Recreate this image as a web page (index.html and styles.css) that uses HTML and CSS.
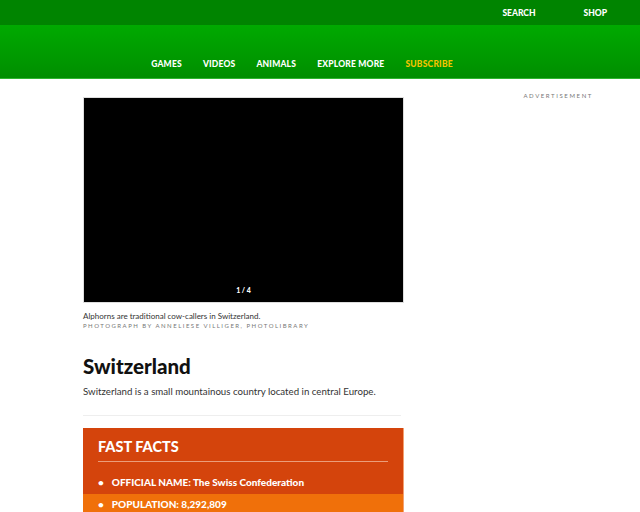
FILE: index.html
```html
<!DOCTYPE html>
<html lang="en">
<head>
  <meta charset="UTF-8" />
  <title>Switzerland - Kids</title>
  <link rel="stylesheet" href="styles.css">
</head>
<body>
  <header>
    <div class="top-bar">
      <a href="#">SEARCH</a>
      <a href="#">SHOP</a>
    </div>
    <nav class="main-nav">
      <a href="#">GAMES</a>
      <a href="#">VIDEOS</a>
      <a href="#">ANIMALS</a>
      <a href="#">EXPLORE MORE</a>
      <a href="#" class="subscribe">SUBSCRIBE</a>
    </nav>
  </header>

  <div class="page">
    <main class="article">
      <div class="gallery">
        <span class="counter">1 / 4</span>
      </div>
      <p class="caption">Alphorns are traditional cow-callers in Switzerland.</p>
      <p class="credit">PHOTOGRAPH BY ANNELIESE VILLIGER, PHOTOLIBRARY</p>

      <h1>Switzerland</h1>
      <p class="intro">Switzerland is a small mountainous country located in central Europe.</p>
      <hr class="divider">

      <section class="fast-facts">
        <h2>FAST FACTS</h2>
        <ul>
          <li><span>OFFICIAL NAME: The Swiss Confederation</span></li>
          <li class="alt"><span>POPULATION: 8,292,809</span></li>
        </ul>
      </section>
    </main>

    <aside class="ad">
      <p>ADVERTISEMENT</p>
    </aside>
  </div>
</body>
</html>
```

FILE: styles.css
```css
body {
  margin: 0;
  background-color: #fff;
  font-family: Lato, "Liberation Sans", sans-serif;
  color: #1a1a1a;
}
a {
  color: #fff;
  text-decoration: none;
}
.top-bar {
  background-color: #008400;
  height: 25px;
  display: flex;
  justify-content: flex-end;
  align-items: center;
  gap: 48px;
  padding-right: 33px;
  font-size: 8.5px;
  font-weight: 900;
}
.main-nav {
  background: linear-gradient(#00aa00, #008e00);
  height: 54px;
  border-bottom: 1px solid #2fb52f;
  display: flex;
  justify-content: center;
  align-items: flex-end;
  gap: 21px;
  padding-right: 36px;
  font-size: 8.5px;
  font-weight: 900;
  letter-spacing: 0.2px;
  box-sizing: border-box;
}
.main-nav a {
  margin-bottom: 9px;
}
.main-nav .subscribe {
  color: #f5c400;
}
.page {
  display: flex;
  justify-content: space-between;
  padding: 18px 47px 0 83px;
}
.article {
  width: 321px;
}
.gallery {
  height: 204px;
  background-color: #000;
  border: 1px solid #ddd;
  display: flex;
  justify-content: center;
  align-items: flex-end;
}
.counter {
  color: #fff;
  font-size: 7px;
  font-weight: 900;
  margin-bottom: 8px;
}
.caption {
  margin: 8px 0 0;
  font-size: 8px;
  color: #333;
}
.credit {
  margin: 1px 0 0;
  font-size: 6px;
  letter-spacing: 1.5px;
  color: #777;
}
h1 {
  margin: 25px 0 0;
  font-size: 20.5px;
  font-weight: 900;
  color: #111;
}
.intro {
  margin: 7px 0 0;
  font-size: 9.7px;
  color: #333;
}
.divider {
  margin: 18px 0 0;
  width: 318px;
  border: none;
  border-top: 1px solid #eee;
}
.fast-facts {
  margin-top: 12px;
  background-color: #d4440c;
  border-right: 1px solid #f4a070;
  color: #fff;
}
.fast-facts h2 {
  margin: 0 15px;
  padding: 10px 0 6px;
  font-size: 14.5px;
  font-weight: 900;
  border-bottom: 1px solid #eb9d7a;
}
.fast-facts ul {
  list-style: none;
  margin: 9px 0 0;
  padding: 0;
}
.fast-facts li {
  padding: 5px 15px 6px 15px;
  font-size: 10px;
  font-weight: 900;
  display: flex;
  gap: 8px;
}
.fast-facts li::before {
  content: "•";
}
.fast-facts li.alt {
  background-color: #f0700a;
  padding-top: 4px;
}
.ad p {
  margin: -5px 0 0;
  font-size: 6px;
  letter-spacing: 1.6px;
  color: #777;
}
```
